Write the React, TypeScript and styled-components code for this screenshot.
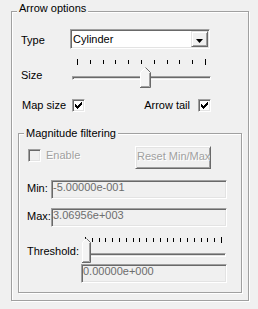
import * as React from 'react';
import styled, { createGlobalStyle } from 'styled-components';

const GlobalStyle = createGlobalStyle`
  html, body {
    margin: 0;
    padding: 0;
    background: #f0f0f0;
  }
  body {
    font-family: "Liberation Sans", Arial, sans-serif;
    font-size: 11px;
    line-height: 13px;
    color: #000;
  }
`;

const Panel = styled.div`
  width: 258px;
  height: 309px;
  box-sizing: border-box;
  padding: 11px 9px 0 11px;
  overflow: hidden;
  background: #f0f0f0;
`;

const Group = styled.div<{ $margin?: string; $padBottom?: number }>`
  display: flex;
  flex-direction: column;
  margin: ${({ $margin }) => $margin || '0'};
  padding-bottom: ${({ $padBottom }) => $padBottom || 0}px;
  border: 1px solid #a0a0a0;
  box-shadow: inset 1px 1px 0 #fff, 1px 1px 0 #fff;
`;

const Caption = styled.div<{ $offset: number }>`
  align-self: flex-start;
  margin: ${({ $offset }) => $offset}px 0 0 5px;
  padding: 0 2px;
  background: #f0f0f0;
  white-space: nowrap;
`;

const Row = styled.div<{ $top: number; $left: number; $right?: number; $spread?: boolean }>`
  display: flex;
  align-items: flex-start;
  justify-content: ${({ $spread }) => ($spread ? 'space-between' : 'flex-start')};
  margin-top: ${({ $top }) => $top}px;
  padding: 0 ${({ $right }) => $right || 0}px 0 ${({ $left }) => $left}px;
`;

const Pair = styled.div`
  display: flex;
  align-items: flex-start;
`;

const Label = styled.span<{
  $width?: number;
  $top?: number;
  $gap?: number;
  $lead?: number;
  $disabled?: boolean;
}>`
  flex: none;
  width: ${({ $width }) => ($width ? `${$width}px` : 'auto')};
  padding-top: ${({ $top }) => $top || 0}px;
  margin: 0 ${({ $gap }) => $gap || 0}px 0 ${({ $lead }) => $lead || 0}px;
  white-space: nowrap;
  color: ${({ $disabled }) => ($disabled ? '#a0a0a0' : '#000')};
  text-shadow: ${({ $disabled }) => ($disabled ? '1px 1px 0 #fff' : 'none')};
`;

const Combo = styled.div`
  display: flex;
  flex: none;
  width: 140px;
  height: 20px;
  box-sizing: border-box;
  padding: 1px;
  background: #fff;
  border: 1px solid;
  border-color: #a0a0a0 #fff #fff #a0a0a0;
  box-shadow: inset 1px 1px 0 #696969, inset -1px -1px 0 #e3e3e3;
`;

const ComboText = styled.span`
  flex: 1;
  padding: 2px 0 0 1px;
  white-space: nowrap;
`;

const DropButton = styled.div`
  flex: none;
  width: 17px;
  height: 16px;
  box-sizing: border-box;
  padding: 7px 0 0 4px;
  background: #f0f0f0;
  border: 1px solid;
  border-color: #e3e3e3 #696969 #696969 #e3e3e3;
  box-shadow: inset 1px 1px 0 #fff, inset -1px -1px 0 #a0a0a0;

  svg {
    display: block;
  }
`;

const SliderBox = styled.div<{ $width: number; $height: number; $shift?: number }>`
  position: relative;
  flex: none;
  width: ${({ $width }) => $width}px;
  height: ${({ $height }) => $height}px;
  margin-left: ${({ $shift }) => $shift || 0}px;
`;

const TickRow = styled.div<{ $padLeft: number; $padRight: number }>`
  display: flex;
  justify-content: space-between;
  align-items: flex-start;
  height: 6px;
  padding: 0 ${({ $padRight }) => $padRight}px 0 ${({ $padLeft }) => $padLeft}px;
`;

const Tick = styled.span<{ $end?: boolean }>`
  width: 1px;
  height: ${({ $end }) => ($end ? 6 : 4)}px;
  margin-top: ${({ $end }) => ($end ? 0 : 1)}px;
  background: #000;
`;

const Track = styled.div<{ $top: number }>`
  margin-top: ${({ $top }) => $top}px;
  height: 4px;
  box-sizing: border-box;
  border: 1px solid;
  border-color: #a0a0a0 #fff #fff #a0a0a0;
  box-shadow: inset 1px 1px 0 #696969, inset -1px -1px 0 #e3e3e3;
`;

const ThumbHolder = styled.div<{ $left: number; $top: number }>`
  position: absolute;
  left: ${({ $left }) => $left}px;
  top: ${({ $top }) => $top}px;

  svg {
    display: block;
  }
`;

const CheckBox = styled.div<{ $disabled?: boolean; $top?: number }>`
  flex: none;
  width: 13px;
  height: 13px;
  box-sizing: border-box;
  margin-top: ${({ $top }) => $top || 0}px;
  padding: 2px;
  background: ${({ $disabled }) => ($disabled ? '#f0f0f0' : '#fff')};
  border: 1px solid;
  border-color: #a0a0a0 #fff #fff #a0a0a0;
  box-shadow: inset 1px 1px 0 #696969, inset -1px -1px 0 #e3e3e3;

  svg {
    display: block;
  }
`;

const Button = styled.div`
  flex: none;
  margin-left: auto;
  width: 76px;
  height: 23px;
  box-sizing: border-box;
  padding: 3px 0 0 1px;
  overflow: hidden;
  white-space: nowrap;
  color: #a0a0a0;
  text-shadow: 1px 1px 0 #fff;
  background: #f0f0f0;
  border: 1px solid;
  border-color: #fff #696969 #696969 #fff;
  box-shadow: inset 1px 1px 0 #e3e3e3, inset -1px -1px 0 #a0a0a0;
`;

const TextBox = styled.div<{ $width: number; $top?: number }>`
  flex: none;
  width: ${({ $width }) => $width}px;
  height: 19px;
  box-sizing: border-box;
  margin-top: ${({ $top }) => $top || 0}px;
  padding: 0 0 0 1px;
  overflow: hidden;
  white-space: nowrap;
  color: #6d6d6d;
  background: #f0f0f0;
  border: 1px solid;
  border-color: #a0a0a0 #fff #fff #a0a0a0;
  box-shadow: inset 1px 1px 0 #696969, inset -1px -1px 0 #e3e3e3;
`;

const Column = styled.div`
  display: flex;
  flex-direction: column;
`;

const CheckMark = () => (
  <svg width="7" height="7" viewBox="0 0 7 7" shapeRendering="crispEdges">
    <rect x="6" y="0" width="1" height="1" />
    <rect x="5" y="1" width="2" height="1" />
    <rect x="0" y="2" width="1" height="1" />
    <rect x="4" y="2" width="3" height="1" />
    <rect x="0" y="3" width="2" height="1" />
    <rect x="3" y="3" width="3" height="1" />
    <rect x="0" y="4" width="5" height="1" />
    <rect x="1" y="5" width="3" height="1" />
    <rect x="2" y="6" width="1" height="1" />
  </svg>
);

const Thumb = ({ w, h }: { w: number; h: number }) => {
  const p = Math.floor(w / 2);
  const m = w / 2;
  return (
    <svg width={w} height={h} viewBox={`0 0 ${w} ${h}`}>
      <polygon points={`0,${p} ${m},0 ${w},${p} ${w},${h} 0,${h}`} fill="#f4f4f4" />
      <polyline points={`0.5,${h - 1} 0.5,${p + 0.5} ${m},0.5`} fill="none" stroke="#fff" />
      <polyline
        points={`${m},0.5 ${w - 0.5},${p + 0.5} ${w - 0.5},${h - 0.5} 0,${h - 0.5}`}
        fill="none"
        stroke="#696969"
      />
      <polyline
        points={`${w - 1.5},${p + 1} ${w - 1.5},${h - 1.5} 1,${h - 1.5}`}
        fill="none"
        stroke="#a0a0a0"
      />
    </svg>
  );
};

interface SliderProps {
  readonly width: number;
  readonly height: number;
  readonly ticks: number;
  readonly padLeft: number;
  readonly padRight: number;
  readonly trackTop: number;
  readonly thumbLeft: number;
  readonly thumbTop: number;
  readonly thumbW: number;
  readonly thumbH: number;
  readonly shift?: number;
}

const Slider = (props: SliderProps) => (
  <SliderBox $width={props.width} $height={props.height} $shift={props.shift}>
    <TickRow $padLeft={props.padLeft} $padRight={props.padRight}>
      {Array.from({ length: props.ticks }).map((_, i) => (
        <Tick key={`tick_${i}`} $end={i === 0 || i === props.ticks - 1} />
      ))}
    </TickRow>
    <Track $top={props.trackTop} />
    <ThumbHolder $left={props.thumbLeft} $top={props.thumbTop}>
      <Thumb w={props.thumbW} h={props.thumbH} />
    </ThumbHolder>
  </SliderBox>
);

const App = () => (
  <Panel>
    <GlobalStyle />
    <Group>
      <Caption $offset={-10}>Arrow options</Caption>
      <Row $top={14} $left={9}>
        <Label $width={49} $top={5}>
          Type
        </Label>
        <Combo>
          <ComboText>Cylinder</ComboText>
          <DropButton>
            <svg width="7" height="4" viewBox="0 0 7 4">
              <polygon points="0,0 7,0 3.5,4" fill="#000" />
            </svg>
          </DropButton>
        </Combo>
      </Row>
      <Row $top={10} $left={9}>
        <Label $width={51} $top={10}>
          Size
        </Label>
        <Slider
          width={139}
          height={29}
          ticks={11}
          padLeft={5}
          padRight={5}
          trackTop={11}
          thumbLeft={68}
          thumbTop={8}
          thumbW={11}
          thumbH={21}
        />
      </Row>
      <Row $top={11} $left={10} $right={37} $spread>
        <Pair>
          <Label $width={50}>Map size</Label>
          <CheckBox>
            <CheckMark />
          </CheckBox>
        </Pair>
        <Pair>
          <Label $gap={8}>Arrow tail</Label>
          <CheckBox>
            <CheckMark />
          </CheckBox>
        </Pair>
      </Row>
      <Group $margin="21px 6px 7px 6px" $padBottom={9}>
        <Caption $offset={-7}>Magnitude filtering</Caption>
        <Row $top={6} $left={9} $right={30}>
          <CheckBox $disabled $top={3} />
          <Label $top={3} $lead={5} $disabled>
            Enable
          </Label>
          <Button>Reset Min/Max</Button>
        </Row>
        <Row $top={11} $left={8}>
          <Label $width={24} $top={2}>
            Min:
          </Label>
          <TextBox $width={176}>-5.00000e-001</TextBox>
        </Row>
        <Row $top={9} $left={8}>
          <Label $width={24} $top={2}>
            Max:
          </Label>
          <TextBox $width={176}>3.06956e+003</TextBox>
        </Row>
        <Row $top={10} $left={8}>
          <Label $width={54} $top={8}>
            Threshold:
          </Label>
          <Column>
            <Slider
              width={144}
              height={26}
              ticks={21}
              padLeft={3}
              padRight={4}
              trackTop={10}
              thumbLeft={0}
              thumbTop={1}
              thumbW={9}
              thumbH={25}
              shift={1}
            />
            <TextBox $width={146} $top={1}>
              0.00000e+000
            </TextBox>
          </Column>
        </Row>
      </Group>
    </Group>
  </Panel>
);

export default App;
